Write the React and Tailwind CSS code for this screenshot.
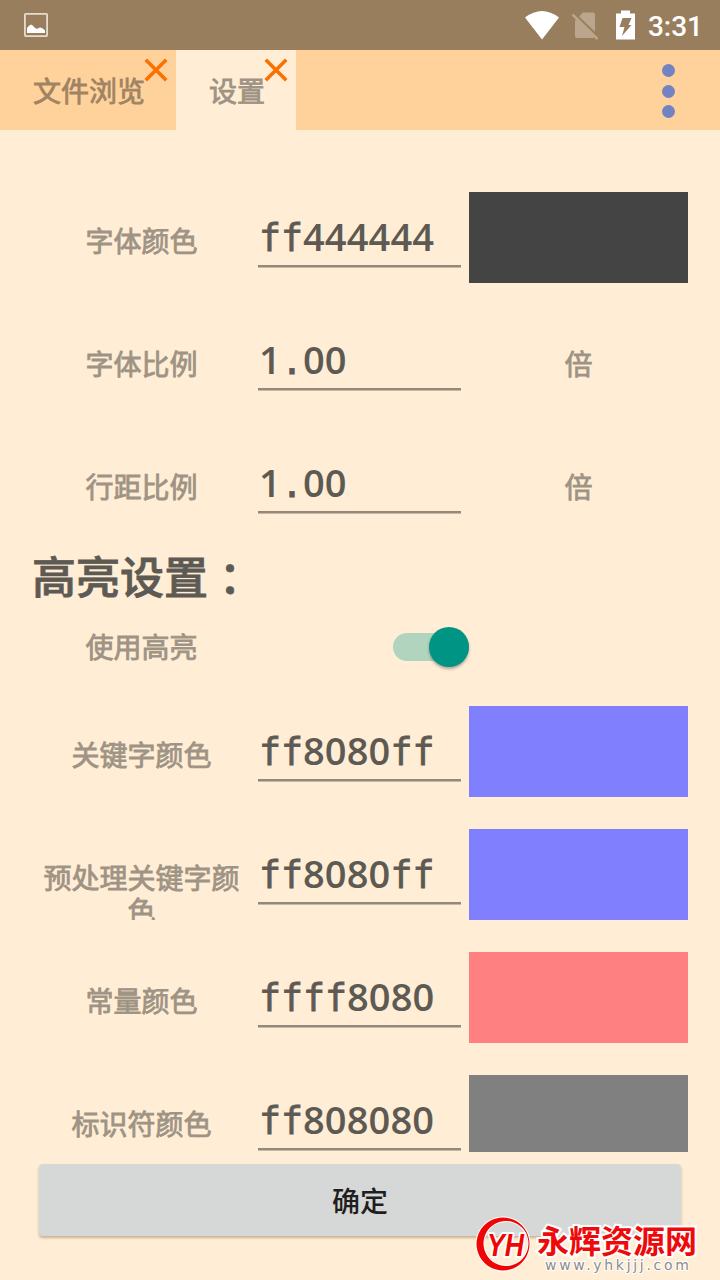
import React from 'react';

const fontRows = [
  { label: '字体颜色', value: 'ff444444', swatchClass: 'bg-[#444444]' },
  { label: '字体比例', value: '1.00', unit: '倍' },
  { label: '行距比例', value: '1.00', unit: '倍' },
];

const highlightRows = [
  { label: '关键字颜色', value: 'ff8080ff', swatchClass: 'bg-[#8080ff]' },
  { label: '预处理关键字颜色', value: 'ff8080ff', swatchClass: 'bg-[#8080ff]' },
  { label: '常量颜色', value: 'ffff8080', swatchClass: 'bg-[#ff8080]' },
  { label: '标识符颜色', value: 'ff808080', swatchClass: 'bg-[#808080]' },
];

const StatusBar = () => (
  <div className="h-[50px] shrink-0 bg-[#997e5d] flex items-center pl-6 pr-[17px]">
    <svg width="24" height="24" viewBox="0 0 24 24">
      <rect x="0.9" y="0.9" width="22.2" height="22.2" rx="0.8" fill="none" stroke="#e6dccb" strokeWidth="1.8" />
      <path d="M3 20v-5q2-3 4-3.500q2 .5 4 3.500q2 1 3 .5q1-1 2.500-1q3 1 4.500 3v2.500z" fill="#fff" />
    </svg>
    <svg width="112" height="32" viewBox="0 0 112 32" className="ml-auto">
      <path d="M17 30.500L0 8.500Q17 -4.500 34 8.500z" fill="#fff" />
      <path d="M58 3.500h10q2 0 2 2v21.500q0 2-2 2h-16q-2 0-2-2v-15.500z" fill="#b9a68c" />
      <path d="M49 4.500L74 28.500" stroke="#997e5d" strokeWidth="2.5" />
      <path d="M47.500 5.500L72.500 30" stroke="#b9a68c" strokeWidth="2.5" />
      <path
        d="M96 1.500h9v3h5v26H91v-26h5z M97.500 9h9l-3 7h3l-9.500 11 2.500-9h-5z"
        fill="#fff"
        fillRule="evenodd"
      />
    </svg>
    <div className="ml-[11px] pt-[3px] font-['Roboto',sans-serif] font-medium text-[28px] leading-8 text-white">
      3:31
    </div>
  </div>
);

const CloseIcon = () => (
  <svg width="24" height="24" viewBox="0 0 24 24" className="absolute right-2 top-2">
    <path d="M3 3l18 18M21 3l-18 18" stroke="#fb7100" strokeWidth="3.600" strokeLinecap="square" />
  </svg>
);

const TabBar = () => (
  <div className="h-20 shrink-0 bg-[#ffd29b] flex">
    <div className="relative w-44 pl-[33px] pb-px flex items-center text-[#9f8464]">
      <span className="[-webkit-text-stroke:0.8px]">文件浏览</span>
      <CloseIcon />
    </div>
    <div className="relative w-[120px] pl-[33px] pb-px flex items-center bg-[#ffeed5] text-[#9e9384]">
      <span className="[-webkit-text-stroke:0.8px]">设置</span>
      <CloseIcon />
    </div>
    <div className="ml-auto mr-[45px] mt-[14px] flex flex-col gap-[7.500px]">
      <div className="size-[13px] rounded-full bg-[#7383c1]" />
      <div className="size-[13px] rounded-full bg-[#7383c1]" />
      <div className="size-[13px] rounded-full bg-[#7383c1]" />
    </div>
  </div>
);

// Digits keep a plain zero, so only the letters and the dot use the mono face.
const MonoValue = ({ value }) => (
  <div className="flex h-[52px] items-baseline whitespace-pre text-[#5d5a54] leading-[52px]">
    {value.split(/([f.]+)/).filter(Boolean).map((part, i) =>
      /[f.]/.test(part) ? (
        <span
          key={i}
          className="font-['DejaVu_Sans_Mono',monospace] text-[36.500px] [-webkit-text-stroke:0.8px]"
        >
          {part}
        </span>
      ) : (
        <span key={i} className="font-['Open_Sans',sans-serif] font-semibold text-[38px] tracking-[0.150px]">
          {part}
        </span>
      )
    )}
  </div>
);

const SettingRow = ({ label, value, unit, swatchClass }) => (
  <div className="grid grid-cols-[218px_219px_219px] h-[91px] shrink-0 overflow-hidden">
    <div className="pl-[9px] pr-2 pt-[31.500px] text-center leading-[33px] text-[#9e9384] [-webkit-text-stroke:0.8px]">
      {label}
    </div>
    <div className="px-2 pt-[18px]">
      <div className="border-b-2 border-[#94887a] pb-[3px] pl-px shadow-[0_1px_0_#c6baa6]">
        <MonoValue value={value} />
      </div>
    </div>
    {unit ? (
      <div className="pt-[32px] text-center leading-[32px] text-[#9e9384] [-webkit-text-stroke:0.8px]">{unit}</div>
    ) : (
      <div className={swatchClass} />
    )}
  </div>
);

const Watermark = () => (
  <div className="absolute left-[475px] top-[1216px] flex">
    <svg width="56" height="56" viewBox="0 0 56 56">
      <path
        d="M28 1.500a26.500 26.500 0 1 0 .01 0z M31 5a22.500 22.500 0 1 1-.01 0z"
        fill="#f00505"
        fillRule="evenodd"
        stroke="#fff"
        strokeWidth="2"
        paintOrder="stroke"
      />
      <text
        x="30.500"
        y="40"
        textAnchor="middle"
        textLength="37"
        lengthAdjust="spacingAndGlyphs"
        fontFamily="Liberation Sans, sans-serif"
        fontSize="32"
        fontStyle="italic"
        fontWeight="bold"
        fill="#f00505"
        stroke="#fff"
        strokeWidth="4"
        strokeLinejoin="round"
        paintOrder="stroke"
      >
        YH
      </text>
    </svg>
    <div className="ml-1.5 pt-[3px] whitespace-nowrap">
      <div className="h-[40px] text-[32px] leading-[40px] font-bold text-[#ee0a0a] [-webkit-text-stroke:4px_white] [paint-order:stroke_fill]">
        永辉资源网
      </div>
      <div className="pl-2 text-[14px] leading-[13px] tracking-[2.700px] font-['DejaVu_Sans',sans-serif] text-[#8c8c8c] [-webkit-text-stroke:2px_white] [paint-order:stroke_fill]">
        www.yhkjjj.com
      </div>
    </div>
  </div>
);

const App = () => (
  <div className="relative w-[720px] h-[1280px] overflow-hidden flex flex-col bg-[#ffeed5] text-[28px] font-['Noto_Sans_CJK_SC',sans-serif]">
    <StatusBar />
    <TabBar />
    <div className="h-[1022px] shrink-0 overflow-hidden px-8 pt-[62px] flex flex-col">
      <div className="flex flex-col gap-8">
        {fontRows.map((row) => (
          <SettingRow key={row.label} {...row} />
        ))}
      </div>
      <div className="mt-[14px] h-[64px] shrink-0 text-[44px] leading-[64px] font-medium text-[#5d5a54] [-webkit-text-stroke:0.8px]">
        高亮设置<span className="relative top-[2px] font-['Noto_Sans_CJK_TC',sans-serif]">：</span>
      </div>
      <div className="h-[65px] mt-[7px] shrink-0 flex items-center">
        <div className="w-[218px] pl-px pb-[2px] text-center text-[#9e9384] [-webkit-text-stroke:0.8px]">使用高亮</div>
        <div className="ml-[143px] w-[76px] h-7 rounded-full bg-[#b1d4bf] flex items-center justify-end">
          <div className="size-10 shrink-0 rounded-full bg-[#009485] shadow-[0_2px_3px_rgba(0,0,0,0.3)]" />
        </div>
      </div>
      <div className="mt-[27px] flex flex-col gap-8">
        {highlightRows.map((row) => (
          <SettingRow key={row.label} {...row} />
        ))}
      </div>
    </div>
    <button className="mt-3 mx-[39px] h-[72px] shrink-0 rounded-[4px] bg-[#d6d8d7] font-medium text-[#1f1f1f] shadow-[0_2px_3px_rgba(90,65,30,0.35)]">
      确定
    </button>
    <Watermark />
  </div>
);

export default App;
